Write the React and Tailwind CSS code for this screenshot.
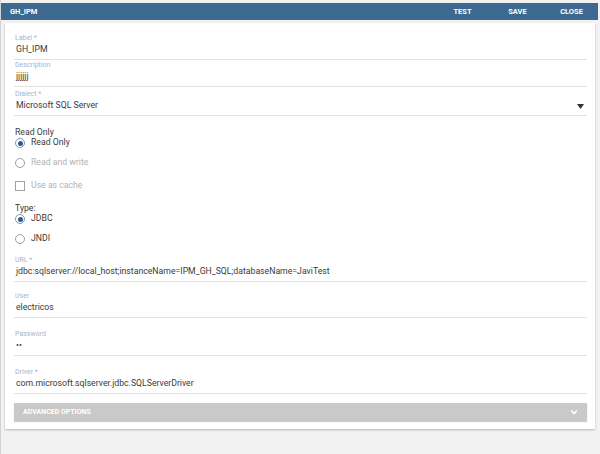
import React from 'react';

function Field({ label, value, select, className = '' }) {
  return (
    <div className={`border-b border-[#e3e3e3] ${className}`}>
      <div className="h-[10px] text-[7px] leading-[10px] text-[#9fb6cf] pl-[1px]">{label}</div>
      <div className="relative h-[16px] text-[8.7px] leading-[12px] text-[#3a3a3a] pl-[2px]">
        {value}
        {select && (
          <svg className="absolute right-[3px] top-[5px]" width="7" height="5" viewBox="0 0 7 5">
            <path d="M0 0h7L3.5 5z" fill="#333" />
          </svg>
        )}
      </div>
    </div>
  );
}

function Radio({ checked, disabled, label, className = '' }) {
  return (
    <div className={`flex items-center h-[12px] ${className}`}>
      <span
        className={`ml-[1px] w-[10px] h-[10px] rounded-full border flex items-center justify-center ${
          checked ? 'border-[#7c98b6]' : 'border-[#a0a0a0]'
        }`}
      >
        {checked && <span className="w-[5px] h-[5px] rounded-full bg-[#2f5a86]" />}
      </span>
      <span className={`ml-[6px] text-[8.7px] ${disabled ? 'text-[#b3b3b3]' : 'text-[#3a3a3a]'}`}>{label}</span>
    </div>
  );
}

export default function App() {
  return (
    <div
      className="w-[600px] h-[454px] bg-[#f2f2f2] border-l border-[#d2d2d2] pt-[3px] overflow-hidden"
      style={{ fontFamily: 'Roboto, "Liberation Sans", sans-serif' }}
    >
      {/* Header */}
      <div className="h-[17px] bg-[#3d6991] flex items-center text-white text-[7.5px] font-bold mr-[2px]">
        <div className="pl-[9px] flex-1">GH_IPM</div>
        <div className="w-[55px] text-center">TEST</div>
        <div className="w-[55px] text-center">SAVE</div>
        <div className="w-[53px] text-center">CLOSE</div>
      </div>

      {/* Card */}
      <div className="ml-[4px] mt-[3px] w-[590px] bg-white shadow-[0_1px_2px_rgba(0,0,0,0.25)] pt-[10px] pl-[9px] pr-[8px] pb-[8px]">
        <Field label="Label *" value="GH_IPM" />
        <Field label="Description" value="jjjjjj" />
        <Field label="Dialect *" value="Microsoft SQL Server" select className="mt-[2px]" />

        <div className="mt-[11px] h-[10px] text-[8.7px] leading-[10px] text-[#3a3a3a] pl-[1px]">Read Only</div>
        <Radio checked label="Read Only" />
        <Radio disabled label="Read and write" className="mt-[8px]" />
        <div className="flex items-center h-[12px] mt-[11px]">
          <span className="ml-[1px] w-[10px] h-[10px] border border-[#a0a0a0]" />
          <span className="ml-[6px] text-[8.7px] text-[#b3b3b3]">Use as cache</span>
        </div>

        <div className="mt-[11px] h-[10px] text-[8.7px] leading-[10px] text-[#3a3a3a] pl-[1px]">Type:</div>
        <Radio checked label="JDBC" />
        <Radio label="JNDI" className="mt-[8px]" />

        <Field
          label="URL *"
          value="jdbc:sqlserver://local_host;instanceName=IPM_GH_SQL;databaseName=JaviTest"
          className="mt-[10px]"
        />
        <Field label="User" value="electricos" className="mt-[9px]" />
        <Field label="Password" value="••" className="mt-[11px]" />
        <Field label="Driver *" value="com.microsoft.sqlserver.jdbc.SQLServerDriver" className="mt-[11px]" />

        <div className="mt-[9px] h-[18px] bg-[#c9c9c9] shadow-[0_1px_1px_rgba(0,0,0,0.2)] flex items-center justify-between px-[9px]">
          <span className="text-[7px] font-bold text-white">ADVANCED OPTIONS</span>
          <svg width="8" height="6" viewBox="0 0 8 6">
            <path d="M1 1.5l3 3 3-3" stroke="#fff" strokeWidth="1.6" fill="none" />
          </svg>
        </div>
      </div>
    </div>
  );
}
